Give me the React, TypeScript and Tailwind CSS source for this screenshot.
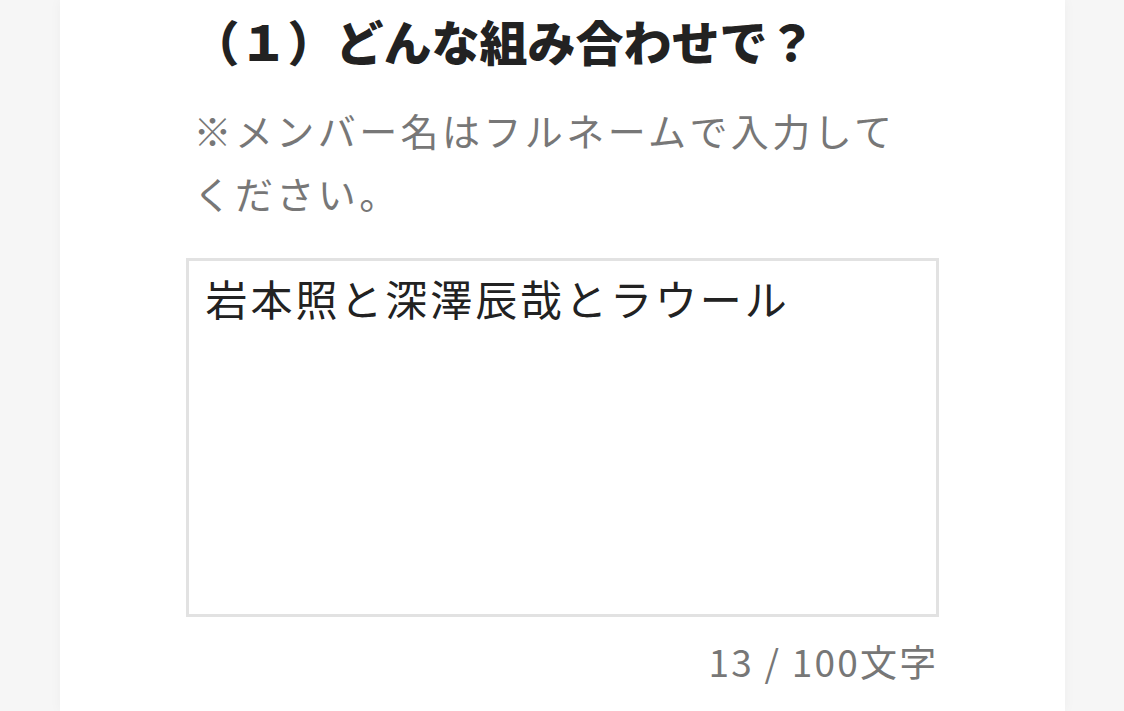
import React from "react";

export default function App() {
  const jp = { fontFamily: '"Noto Sans CJK JP", "Noto Sans", sans-serif' };
  return (
    <div className="min-h-screen w-full bg-[#f6f6f6]" style={jp}>
      <div className="mx-auto w-[1005px] min-h-[711px] bg-white shadow-[0_0_12px_rgba(0,0,0,0.04)] px-[126px] pt-[4px]">
        <h2 className="text-[48px] leading-[72px] font-black text-[#222222] pl-[6px]">
          （１）どんな組み合わせで？
        </h2>
        <p className="mt-[22px] text-[38px] leading-[63px] text-[#777777] tracking-[0.09em] pl-[8px]">
          ※メンバー名はフルネームで入力して
          <br />
          ください。
        </p>
        <div className="mt-[34px] h-[359px] w-full border-[3px] border-[#e2e2e2] bg-white px-[17px] py-[7px]">
          <div className="text-[42px] leading-[60px] tracking-[0.07em] text-[#222222]">岩本照と深澤辰哉とラウール</div>
        </div>
        <div className="mt-[17px] text-right text-[37px] leading-[54px] tracking-[0.06em] text-[#777777]">13 / 100文字</div>
      </div>
    </div>
  );
}
